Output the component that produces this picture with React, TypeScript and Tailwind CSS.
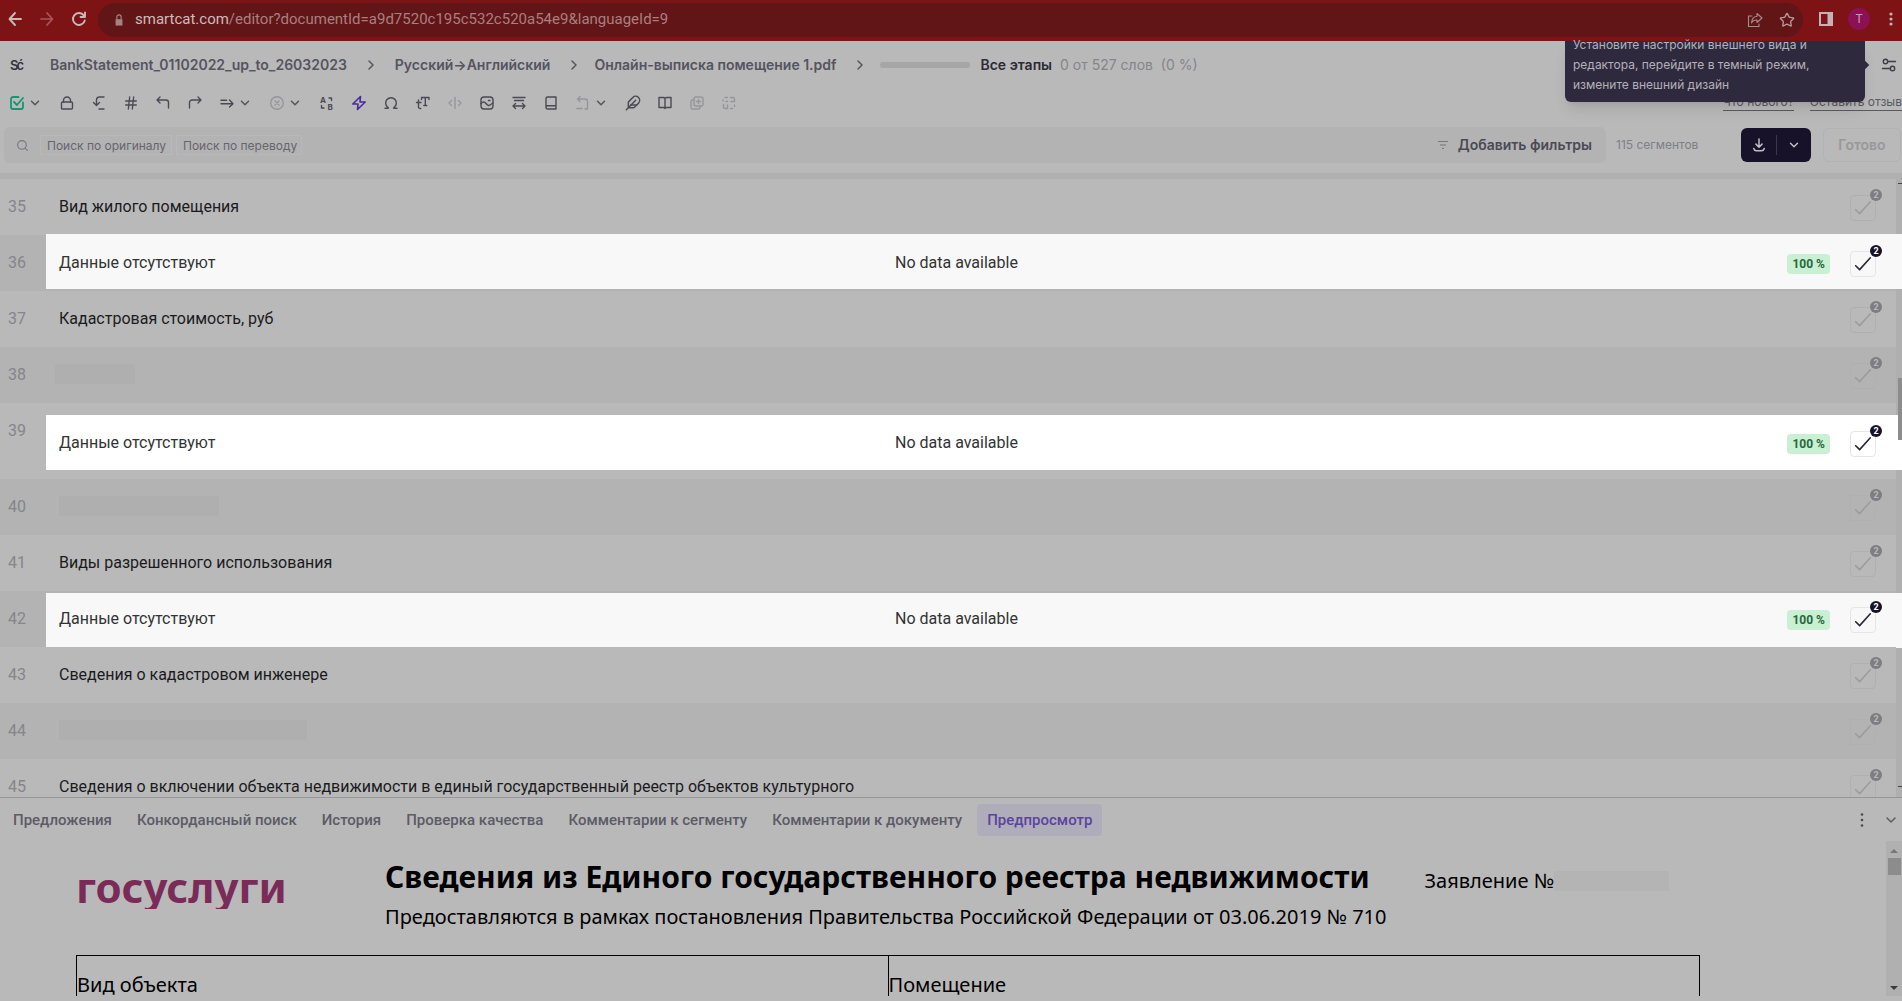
import React from 'react'
import { Hash, Omega, Feather, Search, Star, ChevronDown, ChevronRight } from 'lucide-react'

const segments = [
  { id: 35, source: 'Вид жилого помещения' },
  { id: 36, source: 'Данные отсутствуют', target: 'No data available', light: '-top-px bg-[#f8f8f8]' },
  { id: 37, source: 'Кадастровая стоимость, руб' },
  { id: 38, hidden: 'w-20 -ml-1' },
  { id: 39, source: 'Данные отсутствуют', target: 'No data available', light: 'top-3 bg-white', tall: true },
  { id: 40, hidden: 'w-40' },
  { id: 41, source: 'Виды разрешенного использования' },
  { id: 42, source: 'Данные отсутствуют', target: 'No data available', light: 'top-0.5 bg-[#f8f8f8]' },
  { id: 43, source: 'Сведения о кадастровом инженере' },
  { id: 44, hidden: 'w-[248px]' },
  { id: 45, source: 'Сведения о включении объекта недвижимости в единый государственный реестр объектов культурного' },
]

const tabs = [
  'Предложения',
  'Конкордансный поиск',
  'История',
  'Проверка качества',
  'Комментарии к сегменту',
  'Комментарии к документу',
  'Предпросмотр',
]

function Icon({ children, className = 'size-4' }: { children: React.ReactNode; className?: string }) {
  return (
    <svg viewBox="0 0 16 16" className={`shrink-0 ${className}`} fill="none" stroke="currentColor" strokeWidth="1.4" strokeLinecap="round" strokeLinejoin="round">
      {children}
    </svg>
  )
}

function Tool({ label, menu, className = '', children }: { label: string; menu?: boolean; className?: string; children: React.ReactNode }) {
  return (
    <button aria-label={label} className={`flex h-7 items-center gap-[3px] pl-2 ${menu ? 'w-[50px]' : 'w-8'} ${className}`}>
      {children}
      {menu && <ChevronDown size={14} strokeWidth={2.5} className="shrink-0 text-[#55545c]" />}
    </button>
  )
}

function Toolbar() {
  return (
    <div className="flex h-7 items-center pl-px text-[#4b4a54]">
      <Tool label="Подтвердить" menu className="text-[#16966f]">
        <Icon>
          <path d="M9.5 2H4a2 2 0 0 0-2 2v8a2 2 0 0 0 2 2h8a2 2 0 0 0 2-2V7.5" strokeWidth="1.8" />
          <path d="M5 7l3 3 6-7" strokeWidth="1.8" />
        </Icon>
      </Tool>
      <Tool label="Заблокировать">
        <Icon><rect x="2.5" y="7" width="11" height="7" rx="1" /><path d="M4.5 7V5.5a3.5 3.5 0 0 1 7 0V7" /></Icon>
      </Tool>
      <Tool label="Копировать оригинал">
        <Icon><path d="M13 2H8.5a3 3 0 0 0-3 3v5M2.5 7.5l3 3 3-3M8 14h5" /></Icon>
      </Tool>
      <Tool label="Вставить тег"><Hash size={16} strokeWidth={2} /></Tool>
      <Tool label="Отменить">
        <Icon><path d="M5 2L2 5l3 3M2 5h9a2.5 2.5 0 0 1 2.5 2.5V13" /></Icon>
      </Tool>
      <Tool label="Повторить">
        <Icon><path d="M11 2l3 3-3 3M14 5H5a2.5 2.5 0 0 0-2.5 2.5V13" /></Icon>
      </Tool>
      <Tool label="Перейти" menu>
        <Icon><path d="M2 5.2h5.500M2 8.800h12M10.5 5l3.500 3.800-3.500 3.200" /></Icon>
      </Tool>
      <Tool label="Очистить" menu className="text-[#96969a]">
        <Icon><circle cx="8" cy="8" r="6.3" /><path d="M6 6l4 4M10 6l-4 4" /></Icon>
      </Tool>
      <Tool label="Регистр">
        <Icon>
          <text x="1" y="7.5" fontSize="8" fontWeight="700" fill="currentColor" stroke="none" fontFamily="Inter, sans-serif">A</text>
          <text x="8.5" y="14.5" fontSize="8" fontWeight="700" fill="currentColor" stroke="none" fontFamily="Inter, sans-serif">B</text>
          <path d="M10 3h2.500v2.500M2.500 10.500V13H5" />
        </Icon>
      </Tool>
      <Tool label="Машинный перевод" className="text-[#4a2aa0]">
        <Icon><path d="M9.5 1.500L1.800 9H7l-.5 5.500L14.200 7H9z" strokeWidth="1.6" /></Icon>
      </Tool>
      <Tool label="Спецсимволы"><Omega size={16} strokeWidth={2.2} /></Tool>
      <Tool label="Изменить регистр">
        <Icon><path d="M6.5 4.500V2.500H14v2M10.300 2.500v8M8.800 10.500h3M3.500 5v7c0 1.200.8 1.700 2.200 1.500M1.500 7.500H6" /></Icon>
      </Tool>
      <Tool label="Разделить сегмент" className="text-[#96969a]">
        <Icon><path d="M8 2.500v11M4.500 5.500L2 8l2.500 2.500M11.500 5.500L14 8l-2.500 2.500" /></Icon>
      </Tool>
      <Tool label="Изображение">
        <Icon><rect x="2" y="2" width="12" height="12" rx="3" /><path d="M2 8.500c2-2 3.500-2 5 0s3 2.500 4 1.500l3-2M9.500 5.500H11" /></Icon>
      </Tool>
      <Tool label="Ширина текста">
        <Icon><path d="M2 2.500h12M3.500 5.500h9M2 11h12M4.500 8.500L2 11l2.500 2.500M11.500 8.500L14 11l-2.500 2.500" /></Icon>
      </Tool>
      <Tool label="Глоссарий">
        <Icon><path d="M13 14H4.500A1.500 1.500 0 0 1 3 12.500v-9A1.500 1.500 0 0 1 4.500 2H13zM3 12a1.500 1.500 0 0 1 1.500-1.300H13" /></Icon>
      </Tool>
      <Tool label="Вернуть" menu className="text-[#96969a]">
        <Icon><path d="M5 1.500L2.500 4 5 6.500M2.500 4H10a2.500 2.500 0 0 1 2.500 2.500v7.500M10 14h2.500M2 13.500h5" /></Icon>
      </Tool>
      <Tool label="Комментарий"><Feather size={16} strokeWidth={2.2} /></Tool>
      <Tool label="Словарь">
        <Icon><path d="M8 3.500C7.500 2.700 6.800 2.500 6 2.500H2v10h4.500c.8 0 1.200.3 1.500 1 .3-.7.7-1 1.500-1H14v-10h-4c-.8 0-1.500.2-2 1zM8 3.500v10" /></Icon>
      </Tool>
      <Tool label="Объединить" className="text-[#96969a]">
        <Icon><rect x="5" y="2" width="9" height="9" rx="2" /><path d="M5 5H3.500A1.500 1.500 0 0 0 2 6.500v6A1.500 1.500 0 0 0 3.500 14h6a1.500 1.500 0 0 0 1.500-1.500V11M7.500 6.500h4M9.500 4.500v4" /></Icon>
      </Tool>
      <Tool label="Разъединить" className="text-[#96969a]">
        <Icon><path d="M2 6V5M4 2.500h2.500M9.500 2.500H12A1.500 1.500 0 0 1 13.500 4v2.500H10M2.500 9.500V12A1.500 1.500 0 0 0 4 13.500h2.500V10M9.500 13.500h2M13.500 11.500V10M6.500 6.500H5" /></Icon>
      </Tool>
    </div>
  )
}

function BrowserBar() {
  return (
    <div className="flex h-[41px] shrink-0 items-center bg-[#7d1314] pb-1 text-[#c9b9b9]">
      <div className="flex w-[98px] shrink-0 gap-4 pl-[7px]">
        <button aria-label="Назад"><Icon><path d="M14 8H2.500M8 2L2.500 8 8 14" strokeWidth="1.9" /></Icon></button>
        <button aria-label="Вперед" className="text-[#a35a5b]"><Icon><path d="M2 8h11.500M8 2l5.500 6L8 14" strokeWidth="1.7" /></Icon></button>
        <button aria-label="Обновить"><Icon><path d="M13.800 9.500A6 6 0 1 1 12.500 4L14 5.500M14 1.500V6H9.500" strokeWidth="1.9" /></Icon></button>
      </div>
      <div className="mt-0.5 flex h-[34px] flex-1 items-center rounded-full bg-[#611517] pr-2 pl-4">
        <svg viewBox="0 0 10 14" className="mr-[11px] h-3 w-2.5" fill="#a08484">
          <path d="M1 6h8v7.500H1z" />
          <path d="M2.500 6V3.500a2.500 2.500 0 0 1 5 0V6" fill="none" stroke="#a08484" strokeWidth="1.4" />
        </svg>
        <span className="flex-1 font-['Roboto',sans-serif] text-[15px] text-[#a97f80]">
          <span className="text-[#cdbcbc]">smartcat.com</span>/editor?documentId=a9d7520c195c532c520a54e9&amp;languageId=9
        </span>
        <button aria-label="Поделиться" className="mr-4 text-[#a88a8b]">
          <Icon><path d="M5 4H1.500v10.500H12V12" strokeWidth="1.1" /><path d="M10 1.500L15 6l-5 4.500V8C7.500 8 5.500 9 4.500 11 4.800 7 7 4.500 10 4.200z" strokeWidth="1.1" /></Icon>
        </button>
        <button aria-label="Добавить в закладки" className="text-[#b59b9c]"><Star size={16} strokeWidth={2} /></button>
      </div>
      <div className="flex items-center pr-1 pl-4">
        <svg viewBox="0 0 14 14" className="size-3.5"><path fillRule="evenodd" d="M0 0h14v14H0zM2 2v10h6.500V2z" fill="#c3b3b3" /></svg>
        <span className="ml-[15px] flex size-[22px] items-center justify-center rounded-full bg-[#8b1154] font-['Roboto',sans-serif] text-xs text-[#c99bb4]">T</span>
        <svg viewBox="0 0 14 16" className="ml-3.5 h-4 w-3.5" fill="#c3b3b3">
          <circle cx="7" cy="3" r="1.6" /><circle cx="7" cy="8" r="1.6" /><circle cx="7" cy="13" r="1.6" />
        </svg>
      </div>
    </div>
  )
}

function Header() {
  return (
    <header className="relative flex h-12 items-center pl-2.5 text-sm font-semibold text-[#55545f]">
      <svg viewBox="0 0 16 16" className="mr-6 size-4" fill="#33323c" fontFamily="Inter, sans-serif" fontSize="13" fontWeight="600">
        <text x="0" y="13">S</text>
        <text x="6.5" y="13">ć</text>
      </svg>
      <a href="#project">BankStatement_01102022_up_to_26032023</a>
      <ChevronRight size={16} strokeWidth={2.2} className="mx-4" />
      <a href="#languages">Русский→Английский</a>
      <ChevronRight size={16} strokeWidth={2.2} className="mr-3 ml-4" />
      <a href="#document">Онлайн-выписка помещение 1.pdf</a>
      <ChevronRight size={16} strokeWidth={2.2} className="mr-3 ml-4" />
      <span className="h-1.5 w-[90px] rounded-sm bg-[#a6a6a6]" />
      <span className="ml-2.5 text-[#2c2b36]">Все этапы</span>
      <span className="ml-2 font-normal whitespace-pre text-[#85858a]">0 от 527 слов  (0 %)</span>
      <button aria-label="Настройки" className="absolute top-4 right-[5px] text-[#3f3e48]">
        <Icon><circle cx="4.5" cy="4.5" r="2.2" /><path d="M7 4.500h7.500M1.500 11.500H9" /><circle cx="11.5" cy="11.5" r="2.2" /></Icon>
      </button>
      <div className="absolute top-0 right-[37px] z-10 w-[300px] rounded-b-md bg-[#2f293d] px-2 pb-[7px] font-normal shadow-lg">
        <p className="-mt-1.5 w-[250px] text-xs leading-5 text-[#b3b1ba]">
          Установите настройки внешнего вида и редактора, перейдите в темный режим, измените внешний дизайн
        </p>
        <span className="absolute top-[21px] -right-[3px] size-1.5 rotate-45 bg-[#2f293d]" />
      </div>
    </header>
  )
}

function FilterBar() {
  return (
    <div className="mt-2.5 flex h-9 items-center pl-1">
      <div className="flex h-9 flex-1 items-center rounded-md bg-[#b3b3b3] pr-3.5 pl-3">
        <Search size={13} strokeWidth={2} className="mr-[11px] text-[#77777d]" />
        <input aria-label="Поиск по оригиналу" placeholder="Поиск по оригиналу" className="h-5 w-[132px] border border-[#b8b8b8] pl-1.5 text-xs placeholder:text-[#66656e]" />
        <input aria-label="Поиск по переводу" placeholder="Поиск по переводу" className="ml-1 h-5 w-[126px] border border-[#b8b8b8] pl-1.5 text-xs placeholder:text-[#66656e]" />
        <button className="ml-auto flex items-center gap-2.5 text-sm font-semibold text-[#4b4a54]">
          <svg viewBox="0 0 10 10" className="size-2.5" stroke="#77777d" strokeWidth="1.2"><path d="M0 1.500h10M2 5h6M4 8.500h2" /></svg>
          Добавить фильтры
        </button>
      </div>
      <span className="w-[135px] pl-2.5 text-xs text-[#7f7f85]">115 сегментов</span>
      <div className="flex h-[34px] w-[70px] items-center rounded-md bg-[#17122a] text-[#c0bec8]">
        <button aria-label="Скачать" className="flex h-5 w-9 items-center justify-center border-r border-[#3a3550]">
          <Icon className="size-3.5"><path d="M8 1v9M4.500 7L8 10.500 11.500 7M2 12c.5 2 1.500 2.500 3 2.500h6c1.500 0 2.500-.5 3-2.500" strokeWidth="1.7" /></Icon>
        </button>
        <button aria-label="Форматы" className="flex flex-1 justify-center"><ChevronDown size={14} strokeWidth={2.5} /></button>
      </div>
      <button className="mr-px ml-3 h-[34px] w-[78px] rounded-md border border-[#b2b2b2] text-sm font-semibold text-[#98989b]">Готово</button>
    </div>
  )
}

function SegmentRow({ segment, odd }: { segment: any; odd: boolean }) {
  const { id, source, target, light, tall, hidden } = segment
  return (
    <li className={`relative grid grid-cols-[59px_836fr_1001fr] leading-6 ${tall ? 'h-[76px]' : 'h-14'} ${odd ? 'bg-[#b3b3b3]' : 'bg-[#b9b9b9]'}`}>
      {light && <div className={`absolute -right-1.5 left-[46px] h-[55px] ${light}`} />}
      <span className="relative pt-4 pl-2 text-[#85858a]">{id}</span>
      <span className={`relative whitespace-nowrap ${tall ? 'pt-7' : 'pt-4'} ${light ? 'text-[#333]' : 'text-[#1b1b1e]'}`}>
        {source}
        {hidden && <span className={`mt-px block h-5 bg-[#afafaf] ${hidden}`} />}
      </span>
      <span className={`relative flex items-start ${tall ? 'pt-7' : 'pt-4'}`}>
        <span className="flex-1 text-[#333]">{target}</span>
        {light && <span className="mt-[3px] h-5 rounded bg-[#c9f0d3] px-[5px] text-xs leading-5 font-bold text-[#27693a]">100 %</span>}
        <button
          aria-label={`Подтвердить сегмент ${id}`}
          className={`relative mr-5 ml-5 flex size-[26px] items-center justify-center rounded-sm border ${light ? 'border-[#e6e6e6] text-[#2a2634]' : 'border-[#b0b0b0] text-[#9c9c9f]'}`}
        >
          <Icon className="size-[18px]"><path d="M1.500 9.500L5 13l9.500-10.500" /></Icon>
          <span className={`absolute -top-[7px] -right-[7px] size-3 rounded-full text-center text-[9px] leading-3 font-bold ${light ? 'bg-[#17122a] text-white' : 'bg-[#7d7d82] text-[#b9b9b9]'}`}>2</span>
        </button>
      </span>
    </li>
  )
}

function Segments() {
  return (
    <section className="relative mt-2.5 flex min-h-0 flex-1 overflow-hidden border-t-[6px] border-[#b0b0b0] font-['Roboto',sans-serif] text-base">
      <ol className="flex-1">
        {segments.map((s, i) => <SegmentRow key={s.id} segment={s} odd={i % 2 === 1} />)}
      </ol>
      <div className="flex w-1.5 flex-col items-end bg-[#afafaf]">
        <span className="mt-1 h-px w-1 bg-[#444]" />
        <span className="relative mt-[194px] h-[62px] w-1 bg-[#8c8c8c]" />
        <span className="mt-auto mb-2.5 h-px w-1 bg-[#444]" />
      </div>
    </section>
  )
}

function Preview() {
  return (
    <section className="flex h-[204px] shrink-0 flex-col border-t border-[#97979a]">
      <nav className="flex h-[43px] items-center gap-[5px] pt-px pl-[3px] font-['Roboto',sans-serif] text-[15px] font-medium text-[#5c5b66]">
        {tabs.map(tab => (
          <button key={tab} className={`h-8 rounded-sm px-2.5 ${tab === 'Предпросмотр' ? 'bg-[#b0adba] text-[#5b44a0]' : ''}`}>{tab}</button>
        ))}
        <button aria-label="Меню" className="ml-auto">
          <svg viewBox="0 0 4 16" className="h-4 w-1" fill="#4b4a54"><circle cx="2" cy="2.5" r="1.3" /><circle cx="2" cy="8" r="1.3" /><circle cx="2" cy="13.5" r="1.3" /></svg>
        </button>
        <button aria-label="Свернуть" className="mr-[3px] ml-3.5"><ChevronDown size={16} strokeWidth={2.2} /></button>
      </nav>
      <div className="mb-[5px] flex min-h-0 flex-1 overflow-hidden font-['Noto_Sans','Open_Sans',sans-serif] text-black">
        <div className="flex-1 pr-[186px] pl-[76px]">
          <div className="flex">
            <div className="h-[68px] w-[309px] overflow-hidden text-[42px] leading-[92px] font-bold text-[#7b2b58]">госуслуги</div>
            <div className="mt-4">
              <h1 className="text-3xl leading-10 font-bold">Сведения из Единого государственного реестра недвижимости</h1>
              <p className="text-xl leading-10">Предоставляются в рамках постановления Правительства Российской Федерации от 03.06.2019 № 710</p>
            </div>
            <p className="mt-5 ml-[38px] flex items-start text-xl leading-10 whitespace-nowrap">
              Заявление №<span className="mt-2.5 h-5 w-[115px] bg-[#b4b4b4]" />
            </p>
          </div>
          <table className="mt-[18px] w-full table-fixed border-collapse border border-black text-xl">
            <tbody>
              <tr>
                <td className="h-[58px] border border-black">Вид объекта</td>
                <td className="border border-black">Помещение</td>
              </tr>
            </tbody>
          </table>
        </div>
        <div className="flex w-4 flex-col items-center bg-[#b0b0b0] pt-2 pb-1.5">
          <svg viewBox="0 0 8 4" className="h-1 w-2"><path d="M0 4l4-4 4 4z" fill="#77777a" /></svg>
          <span className="mt-[5px] h-[17px] w-[13px] bg-[#8c8c8c]" />
          <svg viewBox="0 0 8 4" className="mt-auto h-1 w-2"><path d="M0 0l4 4 4-4z" fill="#3a3a3a" /></svg>
        </div>
      </div>
    </section>
  )
}

export default function App() {
  return (
    <div className="flex h-screen flex-col overflow-hidden bg-[#b9b9b9] font-['Inter',sans-serif]">
      <BrowserBar />
      <Header />
      <div className="relative">
        <Toolbar />
        <div className="absolute right-0 bottom-1.5 flex gap-4 text-xs whitespace-nowrap text-[#5b5a64]">
          <a href="#news" className="border-b border-[#5b5a64]">Что нового?</a>
          <a href="#feedback" className="border-b border-[#5b5a64]">Оставить отзыв</a>
        </div>
      </div>
      <FilterBar />
      <Segments />
      <Preview />
    </div>
  )
}
